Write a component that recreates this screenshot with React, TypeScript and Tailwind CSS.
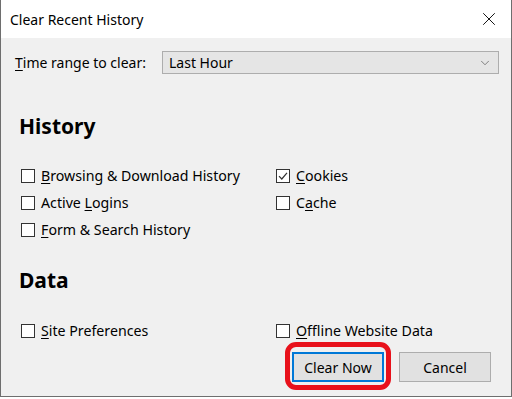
import { ChevronDown, X } from 'lucide-react';

const font = { fontFamily: '"Noto Sans", "Open Sans", sans-serif' };

function Check({ label, u, checked = false }: { label: string; u: number; checked?: boolean }) {
  // u = index of the access-key letter
  return (
    <div className="flex h-[27px] items-center">
      <div className="flex h-[14px] w-[14px] items-center justify-center border border-[#333333] bg-white">
        {checked && (
          <svg width="10" height="10" viewBox="0 0 10 10">
            <path d="M1 5.2 L3.8 8 L9 1.8" fill="none" stroke="#333" strokeWidth="1.2" />
          </svg>
        )}
      </div>
      <span className="ml-[6px] text-[14.2px] text-black">
        {label.slice(0, u)}
        <span className="underline underline-offset-2">{label[u]}</span>
        {label.slice(u + 1)}
      </span>
    </div>
  );
}

export default function App() {
  return (
    <div className="relative h-[399px] w-[512px] bg-white" style={font}>
      <div className="flex h-[397px] flex-col border-x border-b border-[#6e6e6e]">
        {/* barre de titre */}
        <div className="flex h-[38px] items-center justify-between bg-white pl-[9px] pr-[11px]">
          <span className="text-[14px] text-black">Clear Recent History</span>
          <X className="h-[22px] w-[22px] text-black" strokeWidth={1} />
        </div>

        <div className="flex flex-1 flex-col bg-[#f0f0f0] pl-[14px] pr-[12px]">
          {/* plage de temps */}
          <div className="mt-[13px] flex items-center">
            <span className="w-[147px] text-[14px] text-black">
              <span className="underline underline-offset-2">T</span>ime range to clear:
            </span>
            <div className="flex h-[23px] flex-1 items-center justify-between border border-[#adadad] bg-[#e5e5e5] pl-[6px] pr-[6px]">
              <span className="text-[14px] text-black">Last Hour</span>
              <ChevronDown className="h-[14px] w-[14px] text-[#555]" strokeWidth={1.2} />
            </div>
          </div>

          {/* History */}
          <h2 className="mt-[38px] pl-[4px] text-[21px] font-bold leading-[28px] text-black">History</h2>
          <div className="mt-[22px] grid grid-cols-[255px_1fr] pl-[6px]">
            <div className="flex flex-col">
              <Check label="Browsing & Download History" u={0} />
              <Check label="Active Logins" u={7} />
              <Check label="Form & Search History" u={0} />
            </div>
            <div className="flex flex-col">
              <Check label="Cookies" u={0} checked />
              <Check label="Cache" u={1} />
            </div>
          </div>

          {/* Data */}
          <h2 className="mt-[23px] pl-[4px] text-[21px] font-bold leading-[28px] text-black">Data</h2>
          <div className="mt-[23px] grid grid-cols-[255px_1fr] pl-[6px]">
            <Check label="Site Preferences" u={0} />
            <Check label="Offline Website Data" u={0} />
          </div>

          {/* boutons */}
          <div className="mt-[8px] flex justify-end gap-[15px] pr-[8px]">
            <div className="relative">
              <button className="flex h-[30px] w-[92px] items-center justify-center border-2 border-[#0078d7] bg-[#e1e1e1] text-[14px] text-black">
                Clear Now
              </button>
              <div className="pointer-events-none absolute -inset-x-[7px] -top-[10px] -bottom-[8px] rounded-[11px] border-[5px] border-[#e8111b]" />
            </div>
            <button className="flex h-[30px] w-[92px] items-center justify-center border border-[#adadad] bg-[#e1e1e1] text-[14px] text-black">
              Cancel
            </button>
          </div>
        </div>
      </div>
    </div>
  );
}
